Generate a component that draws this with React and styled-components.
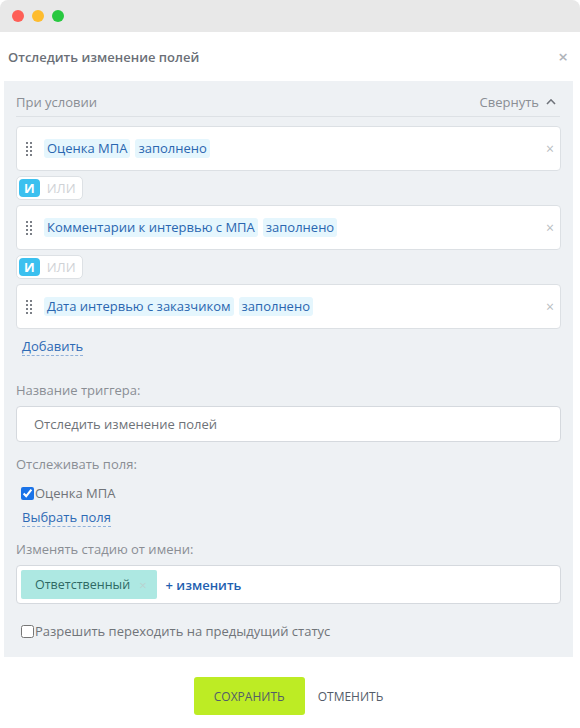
import React, { useState } from 'react';
import styled, { createGlobalStyle } from 'styled-components';

const GlobalStyle = createGlobalStyle`
  * { margin: 0; padding: 0; box-sizing: border-box; }
  body {
    background: #ffffff;
    font-family: 'Open Sans', 'Noto Sans', sans-serif;
    font-size: 13px;
    color: #535c69;
  }
`;

const Window = styled.div`
  width: 580px;
  height: 728px;
  display: flex;
  flex-direction: column;
  background: #fff;
  border-radius: 8px 8px 0 0;
  overflow: hidden;
`;

const TitleBar = styled.div`
  height: 32px;
  background: #e8e8e8;
  display: flex;
  align-items: center;
  gap: 8px;
  padding-left: 12px;
`;

const Dot = styled.span`
  width: 12px;
  height: 12px;
  border-radius: 50%;
  background: ${p => p.color};
`;

const Header = styled.div`
  height: 49px;
  display: flex;
  align-items: center;
  justify-content: space-between;
  padding: 0 12px 0 8px;
  font-weight: 600;
  color: #6b6f77;
  font-size: 13px;
`;

const CloseBtn = styled.span`
  color: #b0b4ba;
  font-size: 17px;
  line-height: 1;
`;

const Panel = styled.div`
  margin: 0 7px 0 4px;
  background: #eef1f4;
  padding: 10px 12px 17px 12px;
  display: flex;
  flex-direction: column;
`;

const SectionHead = styled.div`
  display: flex;
  justify-content: space-between;
  align-items: center;
  height: 26px;
  margin: 0 1px 9px 0;
  border-bottom: 1px solid #dde1e5;
  color: #8a8e94;
  padding-bottom: 4px;
`;

const Collapse = styled.span`
  display: flex;
  align-items: center;
  gap: 7px;
  padding-right: 4px;
`;

const Card = styled.div`
  height: 45px;
  background: #fff;
  border: 1px solid #dce0e4;
  border-radius: 4px;
  display: flex;
  align-items: center;
  padding: 0 6px 0 8px;
  gap: 5px;
`;

const Handle = styled.span`
  display: grid;
  grid-template-columns: 2px 2px;
  gap: 2px;
  margin: 0 7px 0 1px;
  & > i {
    width: 2px;
    height: 2px;
    background: #7b7f86;
  }
`;

const Chip = styled.span`
  background: #e5f6fd;
  color: #2a66b0;
  border-radius: 3px;
  padding: 1px 3px;
  line-height: 17px;
`;

const RemoveX = styled.span`
  margin-left: auto;
  color: #b9bdc2;
  font-size: 14px;
`;

const Toggle = styled.div`
  align-self: flex-start;
  display: flex;
  margin: 5px 0;
  height: 24px;
  width: 67px;
  background: #fff;
  border: 1px solid #dde1e5;
  border-radius: 5px;
  padding: 2px;
  gap: 7px;
  align-items: center;
`;

const ToggleOpt = styled.span`
  height: 18px;
  display: flex;
  align-items: center;
  justify-content: center;
  border-radius: 4px;
  padding: 0 ${p => (p.active ? '5px' : '0')};
  background: ${p => (p.active ? '#3bc0ef' : 'transparent')};
  color: ${p => (p.active ? '#fff' : '#cfd2d6')};
  font-weight: ${p => (p.active ? 700 : 400)};
`;

const DashLink = styled.span`
  align-self: flex-start;
  color: #2d6ab5;
  border-bottom: 1px dashed #8fb0da;
  margin-left: 6px;
  line-height: 18px;
`;

const Label = styled.div`
  color: #8a8e94;
  margin-bottom: 7px;
`;

const Input = styled.div`
  height: 36px;
  background: #fff;
  border: 1px solid #d5d9de;
  border-radius: 4px;
  display: flex;
  align-items: center;
  padding-left: 17px;
  color: #6e7278;
  font-size: 13px;
`;

const Check = styled.label`
  display: flex;
  align-items: center;
  gap: 1px;
  color: #707479;
  margin-left: 5px;
  input {
    width: 13px;
    height: 13px;
    accent-color: #1a73e8;
  }
`;

const PickerBox = styled.div`
  height: 39px;
  background: #fff;
  border: 1px solid #d5d9de;
  border-radius: 4px;
  display: flex;
  align-items: center;
  padding: 4px;
  gap: 9px;
`;

const Person = styled.span`
  height: 29px;
  background: #ade8e2;
  color: #2f6964;
  border-radius: 2px;
  display: flex;
  align-items: center;
  padding: 0 10px 0 14px;
  gap: 9px;
  font-size: 12.5px;
  b { color: #b9d3d0; font-weight: 400; font-size: 13px; }
`;

const AddLink = styled.span`
  color: #1f5fb0;
  font-weight: 600;
`;

const Footer = styled.div`
  display: flex;
  justify-content: center;
  align-items: center;
  gap: 13px;
  padding-top: 20px;
  padding-right: 3px;
`;

const SaveBtn = styled.button`
  width: 111px;
  height: 38px;
  border: none;
  border-radius: 3px;
  background: #bdec24;
  color: #535c69;
  font-family: inherit;
  font-size: 12px;
`;

const CancelBtn = styled.button`
  border: none;
  background: none;
  color: #535c69;
  font-family: inherit;
  font-size: 12px;
`;

const Spacer = styled.div`
  height: ${p => p.h}px;
`;

const conditions = ['Оценка МПА', 'Комментарии к интервью с МПА', 'Дата интервью с заказчиком'];

const DragHandle = () => (
  <Handle>
    {Array.from({ length: 8 }).map((_, i) => <i key={i} />)}
  </Handle>
);

export default function App() {
  const [checked, setChecked] = useState(true);
  const [allowPrev, setAllowPrev] = useState(false);

  return (
    <>
      <GlobalStyle />
      <Window>
        <TitleBar>
          <Dot color="#fe5f57" />
          <Dot color="#febc2e" />
          <Dot color="#28c840" />
        </TitleBar>
        <Header>
          Отследить изменение полей
          <CloseBtn>×</CloseBtn>
        </Header>
        <Panel>
          <SectionHead>
            При условии
            <Collapse>
              Свернуть
              <svg width="10" height="7" viewBox="0 0 10 7" fill="none" stroke="#6f737a" strokeWidth="1.6">
                <path d="M1 6 L5 1.8 L9 6" />
              </svg>
            </Collapse>
          </SectionHead>
          {conditions.map((c, i) => (
            <React.Fragment key={c}>
              {i > 0 && (
                <Toggle>
                  <ToggleOpt active>И</ToggleOpt>
                  <ToggleOpt>ИЛИ</ToggleOpt>
                </Toggle>
              )}
              <Card>
                <DragHandle />
                <Chip>{c}</Chip>
                <Chip>заполнено</Chip>
                <RemoveX>×</RemoveX>
              </Card>
            </React.Fragment>
          ))}
          <Spacer h={8} />
          <DashLink>Добавить</DashLink>
          <Spacer h={25} />
          <Label>Название триггера:</Label>
          <Input>Отследить изменение полей</Input>
          <Spacer h={13} />
          <Label>Отслеживать поля:</Label>
          <Spacer h={4} />
          <Check>
            <input type="checkbox" checked={checked} onChange={() => setChecked(!checked)} />
            Оценка МПА
          </Check>
          <Spacer h={6} />
          <DashLink>Выбрать поля</DashLink>
          <Spacer h={13} />
          <Label>Изменять стадию от имени:</Label>
          <PickerBox>
            <Person>
              Ответственный <b>×</b>
            </Person>
            <AddLink>+ изменить</AddLink>
          </PickerBox>
          <Spacer h={18} />
          <Check>
            <input type="checkbox" checked={allowPrev} onChange={() => setAllowPrev(!allowPrev)} />
            Разрешить переходить на предыдущий статус
          </Check>
        </Panel>
        <Footer>
          <SaveBtn>СОХРАНИТЬ</SaveBtn>
          <CancelBtn>ОТМЕНИТЬ</CancelBtn>
        </Footer>
      </Window>
    </>
  );
}
